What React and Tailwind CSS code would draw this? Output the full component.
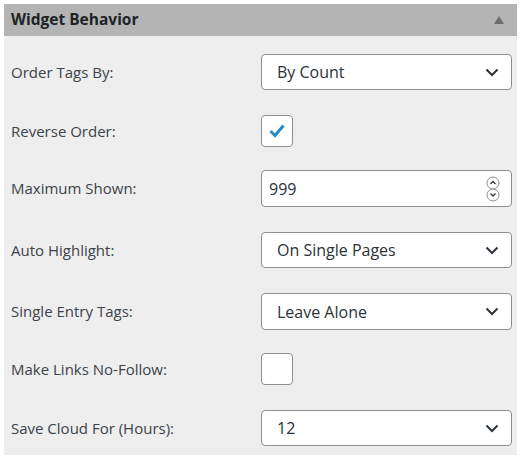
import React from "react";

const font = { fontFamily: '"Open Sans", "Noto Sans", sans-serif' };

function Chevron() {
  return (
    <svg width="14" height="9" viewBox="0 0 14 9" className="shrink-0">
      <path d="M1.5 1.5 L7 7 L12.5 1.5" fill="none" stroke="#2c3338" strokeWidth="2" />
    </svg>
  );
}

function Select({ value, h = "h-[36px]" }) {
  return (
    <div className={`${h} w-[251px] bg-white border border-[#8c8f94] rounded-[4px] flex items-center justify-between pl-[15px] pr-[12px] text-[16px] text-[#2c3338]`}>
      <span>{value}</span>
      <Chevron />
    </div>
  );
}

function Checkbox({ checked }) {
  return (
    <div className="w-[32px] h-[32px] bg-white border border-[#8c8f94] rounded-[4px] flex items-center justify-center">
      {checked && (
        <svg width="18" height="16" viewBox="0 0 18 16">
          <path d="M2.5 8 L7 12.5 L15.5 2.5" fill="none" stroke="#2a8bc4" strokeWidth="3" />
        </svg>
      )}
    </div>
  );
}

function NumberInput({ value }) {
  return (
    <div className="h-[37px] w-[251px] bg-white border border-[#8c8f94] rounded-[4px] flex items-center justify-between pl-[7px] pr-[11px] text-[16px] text-[#2c3338]">
      <span>{value}</span>
      <svg width="14" height="26" viewBox="0 0 14 26">
        <rect x="1" y="1" width="12" height="12" rx="6" fill="#fff" stroke="#8c8f94" />
        <rect x="1" y="13" width="12" height="12" rx="6" fill="#fff" stroke="#8c8f94" />
        <path d="M4.5 8 L7 5.5 L9.5 8" fill="none" stroke="#2c3338" strokeWidth="1.3" />
        <path d="M4.5 17.5 L7 20 L9.5 17.5" fill="none" stroke="#2c3338" strokeWidth="1.3" />
      </svg>
    </div>
  );
}

function Row({ label, children, className = "" }) {
  return (
    <div className={`flex items-center ${className}`}>
      <label className="w-[257px] pl-[7px] text-[15px] text-[#3c434a]">{label}</label>
      {children}
    </div>
  );
}

export default function App() {
  return (
    <div className="bg-white w-[520px] h-[462px] pt-[4px] pl-[4px]" style={font}>
      <div className="w-[513px]">
        <div className="h-[32px] bg-[#b4b4b4] flex items-center justify-between pl-[7px] pr-[13px]">
          <span className="text-[15.5px] font-bold text-[#1d2327]">Widget Behavior</span>
          <svg width="10" height="8" viewBox="0 0 10 8">
            <path d="M0 8 L5 0 L10 8 Z" fill="#6e6e6e" />
          </svg>
        </div>
        <div className="bg-[#eeeeee] pt-[18px] pb-[9px] flex flex-col">
          <Row label="Order Tags By:">
            <Select value="By Count" />
          </Row>
          <Row label="Reverse Order:" className="mt-[25px]">
            <Checkbox checked />
          </Row>
          <Row label="Maximum Shown:" className="mt-[23px]">
            <NumberInput value="999" />
          </Row>
          <Row label="Auto Highlight:" className="mt-[25px]">
            <Select value="On Single Pages" />
          </Row>
          <Row label="Single Entry Tags:" className="mt-[25px]">
            <Select value="Leave Alone" h="h-[37px]" />
          </Row>
          <Row label="Make Links No-Follow:" className="mt-[23px]">
            <Checkbox />
          </Row>
          <Row label="Save Cloud For (Hours):" className="mt-[25px]">
            <Select value="12" />
          </Row>
        </div>
      </div>
    </div>
  );
}
